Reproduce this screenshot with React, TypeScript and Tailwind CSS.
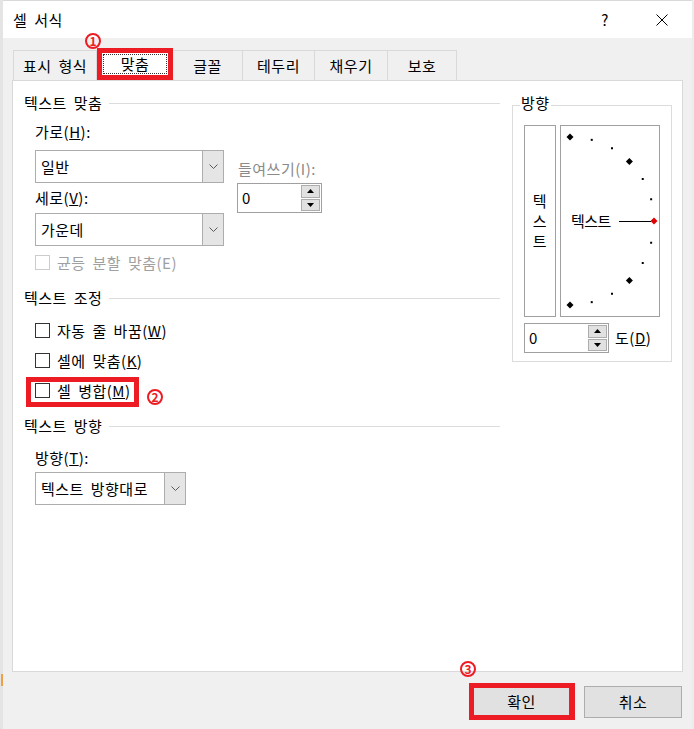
import React from 'react'

const tabs = [
  { label: '표시 형식', w: 'w-[84px]' },
  { label: '맞춤', w: 'w-[76px]', active: true },
  { label: '글꼴', w: 'w-[70px]' },
  { label: '테두리', w: 'w-[72px]' },
  { label: '채우기', w: 'w-[73px]' },
  { label: '보호', w: 'w-[69px]' },
]

function Chevron() {
  return (
    <svg width="9" height="5" viewBox="0 0 9 5">
      <polyline points="0.5,0.5 4.5,4.5 8.5,0.5" fill="none" stroke="#5a5a5a" strokeWidth="1" />
    </svg>
  )
}

function Select({ value, className }: { value: string; className: string }) {
  return (
    <div className={`flex h-[33px] border border-[#adadad] bg-white ${className}`}>
      <div className="flex flex-1 items-center pl-[5px] leading-[18px]">{value}</div>
      <div className="flex w-[21px] items-center justify-center border-l border-[#adadad] bg-[#e5e5e5]">
        <Chevron />
      </div>
    </div>
  )
}

function Spinner() {
  return (
    <div className="flex h-[30px] w-[85px] border border-[#a0a0a0] bg-white">
      <div className="flex flex-1 items-center pl-[4px] leading-[18px]">0</div>
      <div className="flex w-[21px] flex-col gap-px p-px">
        <div className="flex flex-1 items-center justify-center border border-[#adadad] bg-[#e1e1e1]">
          <svg width="7" height="4" viewBox="0 0 7 4">
            <polygon points="0,4 3.5,0 7,4" fill="#000" />
          </svg>
        </div>
        <div className="flex flex-1 items-center justify-center border border-[#adadad] bg-[#e1e1e1]">
          <svg width="7" height="4" viewBox="0 0 7 4">
            <polygon points="0,0 3.5,4 7,0" fill="#000" />
          </svg>
        </div>
      </div>
    </div>
  )
}

function Header({ children }: { children: React.ReactNode }) {
  return (
    <div className="flex h-[18px] items-center gap-[7px] leading-[18px]">
      <span>{children}</span>
      <div className="h-px flex-1 bg-[#dcdcdc]" />
    </div>
  )
}

function Check({ children, disabled }: { children: React.ReactNode; disabled?: boolean }) {
  return (
    <div className={`flex h-[15px] items-center gap-[7px] leading-[15px] ${disabled ? 'text-[#a0a0a0]' : ''}`}>
      <span className={`h-[15px] w-[15px] border bg-white ${disabled ? 'border-[#cccccc]' : 'border-[#333333]'}`} />
      <span>{children}</span>
    </div>
  )
}

function Dial() {
  // 13 marks on a half circle, every 15 degrees
  const marks = Array.from({ length: 13 }, (_, i) => {
    const a = ((90 - i * 15) * Math.PI) / 180
    return { x: 10 + 84 * Math.cos(a), y: 96 - 84 * Math.sin(a), big: i % 3 === 0, red: i === 6 }
  })
  return (
    <svg width="98" height="190" viewBox="1 1 98 190" className="block">
      {marks.map((m, i) =>
        m.big ? (
          <polygon
            key={i}
            points={`${m.x - 3.5},${m.y} ${m.x},${m.y - 3.5} ${m.x + 3.5},${m.y} ${m.x},${m.y + 3.5}`}
            fill={m.red ? '#e00000' : '#000'}
          />
        ) : (
          <rect key={i} x={m.x - 1} y={m.y - 1} width="2" height="2" fill="#000" />
        )
      )}
      <line x1="59" y1="96.5" x2="91" y2="96.5" stroke="#000" strokeWidth="1" />
      <text x="11" y="101.5" fontSize="15" fill="#000" letterSpacing="-0.5">
        텍스트
      </text>
    </svg>
  )
}

function Mark({ n, className }: { n: string; className: string }) {
  return (
    <span
      className={`absolute flex h-[16px] w-[16px] items-center justify-center rounded-full border-2 border-[#ed1c24] text-[12px] leading-none font-bold tracking-normal text-[#ed1c24] ${className}`}
    >
      {n}
    </span>
  )
}

export default function App() {
  return (
    <div className="relative flex h-[729px] w-[694px] overflow-hidden bg-[#f0f0f0] font-['Noto_Sans_CJK_KR',sans-serif] text-[15px] tracking-[0.5px] text-black [word-spacing:3px]">
      <div className="flex w-[3px] flex-col bg-[#e4e4e4]">
        <div className="h-[674px]" />
        <div className="ml-[1px] h-[12px] w-[2px] bg-[#f0a040]" />
      </div>

      <div className="flex w-[689px] flex-col">
        {/* title bar */}
        <div className="flex h-[38px] items-center border-t border-[#d9d9d9] bg-white">
          <span className="flex-1 pl-[10px] leading-[18px]">셀 서식</span>
          <span className="w-[20px] text-center leading-[18px]">?</span>
          <span className="mr-[20px] ml-[37px] flex w-[20px] justify-center">
            <svg width="12" height="12" viewBox="0 0 12 12">
              <line x1="0.5" y1="0.5" x2="11.5" y2="11.5" stroke="#000" strokeWidth="1" />
              <line x1="11.5" y1="0.5" x2="0.5" y2="11.5" stroke="#000" strokeWidth="1" />
            </svg>
          </span>
        </div>

        <div className="flex flex-1 flex-col pt-[10px] pl-[9px]">
          {/* tabs */}
          <div className="ml-[1px] flex h-[32px] items-end">
            {tabs.map((t, i) =>
              t.active ? (
                <div key={t.label} className={`${t.w} h-[32px] border-[5px] border-[#ed1c24] bg-white p-px`}>
                  <div className="flex h-full items-center justify-center border border-dotted border-[#333] leading-[18px]">
                    {t.label}
                  </div>
                </div>
              ) : (
                <div
                  key={t.label}
                  className={`${t.w} flex h-[30px] items-center justify-center border-t border-r border-[#d9d9d9] leading-[18px] ${i === 0 ? 'border-l' : ''}`}
                >
                  {t.label}
                </div>
              )
            )}
          </div>

          {/* panel */}
          <div className="flex h-[592px] w-[671px] items-start gap-[12px] border border-[#d9d9d9] bg-white pt-[13px] pl-[11px]">
            <div className="w-[476px]">
              <Header>텍스트 맞춤</Header>
              <div className="pl-[11px]">
                <div className="mt-[11px] leading-[18px]">
                  가로(<u>H</u>):
                </div>
                <div className="mt-[9px] flex items-start gap-[13px]">
                  <div className="w-[189px]">
                    <Select value="일반" className="w-[189px]" />
                    <div className="mt-[6px] leading-[18px]">
                      세로(<u>V</u>):
                    </div>
                    <div className="mt-[6px]">
                      <Select value="가운데" className="w-[189px]" />
                    </div>
                  </div>
                  <div className="mt-[10px]">
                    <div className="pl-px leading-[18px] text-[#8a8a8a]">들여쓰기(I):</div>
                    <div className="mt-[5px]">
                      <Spinner />
                    </div>
                  </div>
                </div>
                <div className="mt-[9px]">
                  <Check disabled>균등 분할 맞춤(E)</Check>
                </div>
              </div>

              <div className="mt-[19px]">
                <Header>텍스트 조정</Header>
              </div>
              <div className="flex flex-col gap-[15px] pt-[16px] pl-[11px]">
                <Check>
                  자동 줄 바꿈(<u>W</u>)
                </Check>
                <Check>
                  셀에 맞춤(<u>K</u>)
                </Check>
                <div className="relative w-fit">
                  <Check>
                    셀 병합(<u>M</u>)
                  </Check>
                  <span className="absolute -top-[6px] -left-[9px] h-[30px] w-[113px] border-[5px] border-[#ed1c24]" />
                </div>
              </div>

              <div className="mt-[19px]">
                <Header>텍스트 방향</Header>
              </div>
              <div className="pl-[11px]">
                <div className="mt-[14px] leading-[18px]">
                  방향(<u>T</u>):
                </div>
                <div className="mt-[5px]">
                  <Select value="텍스트 방향대로" className="w-[151px]" />
                </div>
              </div>
            </div>

            {/* orientation */}
            <div className="relative mt-[11px] h-[257px] w-[160px] border border-[#dcdcdc] pt-[19px] pl-[11px]">
              <span className="absolute -top-[12px] left-[7px] bg-white px-px leading-[18px]">방향</span>
              <div className="flex gap-[4px]">
                <div className="flex h-[192px] w-[32px] flex-col items-center justify-center border border-[#a0a0a0] leading-[20px]">
                  <span>텍</span>
                  <span>스</span>
                  <span>트</span>
                </div>
                <div className="h-[192px] w-[100px] border border-[#a0a0a0]">
                  <Dial />
                </div>
              </div>
              <div className="mt-[6px] flex items-center gap-[6px]">
                <Spinner />
                <span className="leading-[18px]">
                  도(<u>D</u>)
                </span>
              </div>
            </div>
          </div>

          {/* buttons */}
          <div className="mt-[11px] flex items-center justify-end gap-[9px] pr-[10px]">
            <div className="h-[37px] w-[106px] border-[5px] border-[#ed1c24]">
              <div className="flex h-full items-center justify-center border-r border-[#0078d7] bg-[#e1e1e1] leading-[18px]">
                확인
              </div>
            </div>
            <div className="flex h-[32px] w-[98px] items-center justify-center border border-[#adadad] bg-[#e1e1e1] leading-[18px]">
              취소
            </div>
          </div>
        </div>
      </div>

      <div className="w-[2px] bg-[#ececec]" />

      <Mark n="1" className="top-[33px] left-[85px]" />
      <Mark n="2" className="top-[389px] left-[147px]" />
      <Mark n="3" className="top-[661px] left-[460px]" />
    </div>
  )
}
